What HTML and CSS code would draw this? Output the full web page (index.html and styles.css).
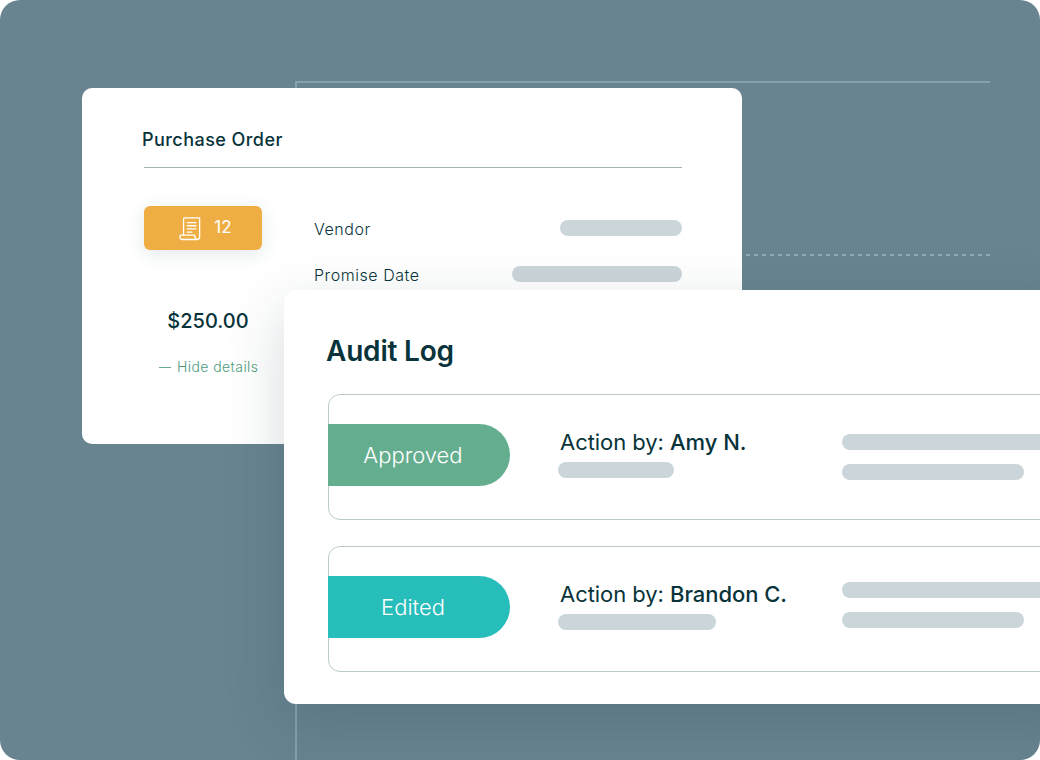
FILE: index.html
```html
<!DOCTYPE html>
<html>
<head>
<meta charset="utf-8">
<title>Audit Log</title>
<link rel="stylesheet" href="styles.css">
</head>
<body>
<div class="stage">
    <div class="line line-top"></div>
    <div class="line line-left"></div>
    <div class="line-dashed"></div>

    <div class="card order">
        <h2 class="order-title">Purchase Order</h2>
        <div class="order-body">
            <div class="order-left">
                <div class="badge">
                    <svg class="badge-icon" viewBox="0 0 24 26" fill="none" stroke="#fff" stroke-width="1.4" stroke-linecap="round" stroke-linejoin="round">
                        <path d="M5 20V2.5a1 1 0 0 1 1-1h16.5V22a2.5 2.5 0 0 1-5 0.5v-1.2a1 1 0 0 0-1-1H2a1 1 0 0 0-1 1v1.2a2.5 2.5 0 0 0 2.5 2.5H20"/>
                        <path d="M9 6.5h9.5M9 10h9.5M9 13.5h9.5M9 17h5"/>
                    </svg>
                    <span class="badge-num">12</span>
                </div>
                <div class="amount">$250.00</div>
                <div class="hide-details"><span class="dash"></span>Hide details</div>
            </div>
            <div class="order-right">
                <div class="field"><span>Vendor</span><span class="bar bar-vendor"></span></div>
                <div class="field"><span>Promise Date</span><span class="bar bar-date"></span></div>
            </div>
        </div>
    </div>

    <div class="card audit">
        <h1 class="audit-title">Audit Log</h1>
        <div class="entry">
            <div class="pill approved">Approved</div>
            <div class="who">
                <div class="action">Action by: <b>Amy N.</b></div>
                <span class="bar bar-amy"></span>
            </div>
            <div class="extra">
                <span class="bar bar-long"></span>
                <span class="bar bar-mid"></span>
            </div>
        </div>
        <div class="entry">
            <div class="pill edited">Edited</div>
            <div class="who">
                <div class="action">Action by: <b>Brandon C.</b></div>
                <span class="bar bar-brandon"></span>
            </div>
            <div class="extra extra-up">
                <span class="bar bar-long"></span>
                <span class="bar bar-mid"></span>
            </div>
        </div>
    </div>
</div>
</body>
</html>
```

FILE: styles.css
```css
html, body {
    margin: 0;
    background: #fff;
}
body {
    font-family: "Inter", "Liberation Sans", sans-serif;
    color: #08333a;
}
.stage {
    position: relative;
    width: 1040px;
    height: 760px;
    overflow: hidden;
    border-radius: 20px;
    background: #678490;
}

/* background lines */
.line {
    position: absolute;
    background: #84a2aa;
}
.line-top {
    left: 296px;
    top: 81px;
    width: 694px;
    height: 2px;
}
.line-left {
    left: 295px;
    top: 81px;
    width: 2px;
    height: 679px;
}
.line-dashed {
    position: absolute;
    left: 742px;
    top: 254px;
    width: 248px;
    height: 2px;
    background: repeating-linear-gradient(90deg, transparent 0, transparent 4px, #94adb4 4px, #94adb4 8px);
}

/* cards */
.card {
    position: absolute;
    background: #fff;
    box-sizing: border-box;
}
.order {
    left: 82px;
    top: 88px;
    width: 660px;
    height: 356px;
    border-radius: 10px;
    padding: 40px 60px 0 60px;
}
.order-title {
    margin: 0;
    padding-bottom: 16px;
    font-size: 18px;
    line-height: 24px;
    font-weight: 450;
    letter-spacing: 0.45px;
    position: relative;
}
.order-title::after {
    content: "";
    position: absolute;
    left: 2px;
    right: 0;
    bottom: 0;
    height: 1px;
    background: #a3b3b6;
}
.order-body {
    display: flex;
    margin-top: 38px;
    padding-left: 2px;
}
.order-left {
    width: 118px;
    margin-right: 52px;
    flex: none;
}
.badge {
    display: flex;
    align-items: center;
    justify-content: center;
    box-sizing: border-box;
    gap: 13px;
    height: 44px;
    padding-left: 5px;
    border-radius: 6px;
    background: #efae44;
    color: #fff;
    font-size: 17px;
    box-shadow: 0 4px 18px rgba(60, 90, 100, 0.14);
}
.badge-icon {
    width: 22px;
    height: 25px;
}
.badge-num {
    margin-bottom: 2px;
}
.amount {
    margin-top: 58px;
    width: 128px;
    text-align: center;
    font-size: 20px;
    line-height: 26px;
    font-weight: 450;
}
.hide-details {
    display: flex;
    align-items: center;
    gap: 6px;
    margin: 23px 0 0 15px;
    width: 130px;
    color: #4c9c7c;
    font-size: 14px;
    line-height: 20px;
    font-weight: 300;
    letter-spacing: 0.42px;
}
.dash {
    width: 12px;
    height: 1px;
    background: #64ae8f;
}
.order-right {
    flex: 1;
    padding-top: 11px;
}
.field {
    display: flex;
    justify-content: space-between;
    align-items: center;
    height: 24px;
    margin-bottom: 22px;
    font-size: 16px;
    font-weight: 300;
    letter-spacing: 0.55px;
}
.bar {
    display: block;
    height: 16px;
    border-radius: 8px;
    background: #cbd6da;
}
.bar-vendor { width: 122px; margin-top: -2px; }
.bar-date { width: 170px; margin-top: -2px; }

.audit {
    left: 284px;
    top: 290px;
    width: 800px;
    height: 414px;
    border-radius: 12px;
    padding: 43px 0 0 44px;
    box-shadow: 0 20px 60px rgba(30, 50, 60, 0.18);
}
.audit-title {
    margin: 0 0 24px -2px;
    font-size: 28px;
    line-height: 37px;
    font-weight: 600;
    letter-spacing: -0.2px;
}
.entry {
    display: flex;
    box-sizing: border-box;
    width: 760px;
    height: 126px;
    margin-bottom: 26px;
    border: 1px solid #bdcbcd;
    border-radius: 12px;
    padding-top: 29px;
}
.pill {
    box-sizing: border-box;
    width: 182px;
    height: 62px;
    margin-left: -1px;
    padding-right: 12px;
    border-radius: 0 31px 31px 0;
    color: #fff;
    font-size: 22px;
    font-weight: 300;
    line-height: 62px;
    text-align: center;
    flex: none;
}
.approved { background: #64ae8f; }
.edited { background: #27bdbb; }
.who {
    width: 284px;
    flex: none;
    margin-left: 48px;
    padding-top: 3px;
}
.action {
    margin: 0 0 5px 2px;
    font-size: 22px;
    line-height: 30px;
    font-weight: 400;
    letter-spacing: -0.05px;
    white-space: nowrap;
}
.action b { font-weight: 480; }
.bar-amy { width: 116px; }
.bar-brandon { width: 158px; }
.extra {
    flex: 1;
    padding-top: 10px;
}
.extra-up { padding-top: 6px; }
.bar-long { width: 240px; margin-bottom: 14px; }
.bar-mid { width: 182px; }
```
